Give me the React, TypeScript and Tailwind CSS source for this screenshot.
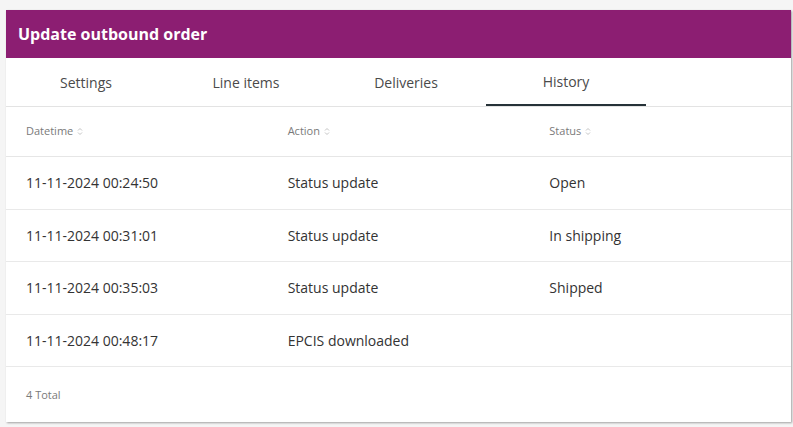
import React from 'react';

const rows = [
  { datetime: '11-11-2024 00:24:50', action: 'Status update', status: 'Open' },
  { datetime: '11-11-2024 00:31:01', action: 'Status update', status: 'In shipping' },
  { datetime: '11-11-2024 00:35:03', action: 'Status update', status: 'Shipped' },
  { datetime: '11-11-2024 00:48:17', action: 'EPCIS downloaded', status: '' },
];

const tabs = ['Settings', 'Line items', 'Deliveries', 'History'];

const SortIcon = () => (
  <svg width="6" height="9" viewBox="0 0 6 9" className="ml-[4px] inline-block" fill="none" stroke="#c4c4c4" strokeWidth="1">
    <path d="M1 3.5 L3 1.5 L5 3.5" />
    <path d="M1 5.5 L3 7.5 L5 5.5" />
  </svg>
);

const App: React.FC = () => {
  return (
    <div className="w-[793px] h-[427px] bg-[#f5f5f5] pt-[10px] pl-[6px]" style={{ fontFamily: '"Open Sans", sans-serif' }}>
      <div className="w-[785px] bg-white shadow-[1px_1px_2px_rgba(0,0,0,0.35)]">
        <div className="h-[48px] bg-[#8c1e72] flex items-center px-[12px]">
          <h1 className="text-white font-bold text-[16px]">Update outbound order</h1>
        </div>

        <div className="flex h-[49px] border-b border-[#e3e3e3]">
          {tabs.map((t) => (
            <div
              key={t}
              className={`w-[160px] flex items-center justify-center pt-[1px] text-[14px] text-[#4a4a4a] ${
                t === 'History' ? 'border-b-2 border-[#263238]' : ''
              }`}
            >
              {t}
            </div>
          ))}
        </div>

        <div className="grid grid-cols-3 h-[50px] items-center border-b border-[#e6e6e6] text-[11px] text-[#7a7a7a]">
          <div className="pl-[20px] flex items-center">Datetime<SortIcon /></div>
          <div className="pl-[20px] flex items-center">Action<SortIcon /></div>
          <div className="pl-[20px] flex items-center">Status<SortIcon /></div>
        </div>

        {rows.map((r) => (
          <div key={r.datetime} className="grid grid-cols-3 h-[52.5px] items-center border-b border-[#e9e9e9] text-[14px] text-[#333]">
            <div className="pl-[20px]">{r.datetime}</div>
            <div className="pl-[20px]">{r.action}</div>
            <div className="pl-[20px]">{r.status}</div>
          </div>
        ))}

        <div className="h-[55px] flex items-center pl-[20px] pt-[2px] text-[11px] text-[#7a7a7a]">4 Total</div>
      </div>
    </div>
  );
};

export default App;
